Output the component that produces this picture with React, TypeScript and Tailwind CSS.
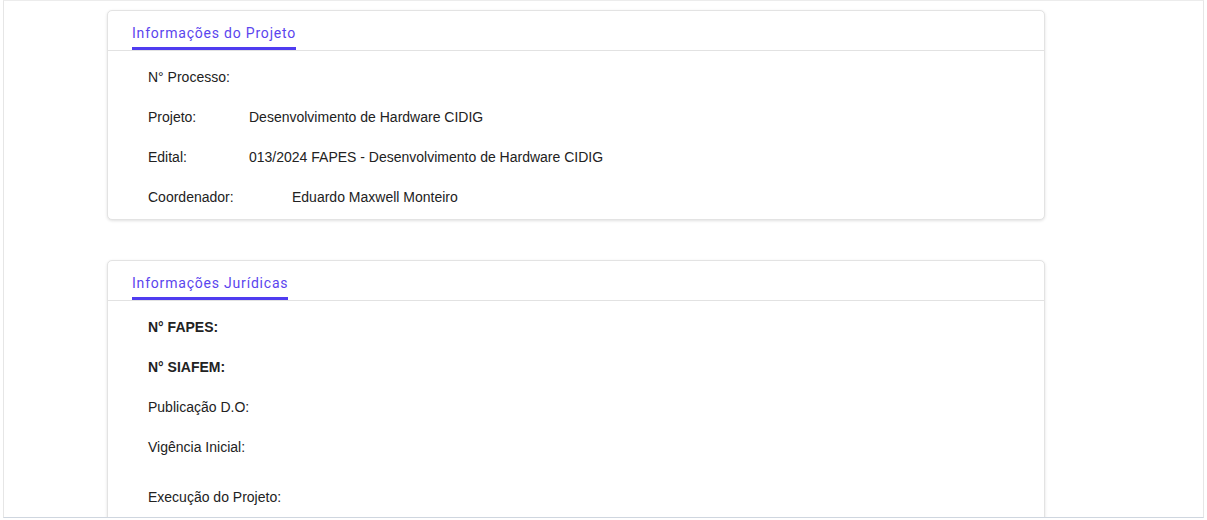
import React from "react";

const rowsProjeto = [
  { label: "N° Processo:", value: "", pad: "w-[101px]" },
  { label: "Projeto:", value: "Desenvolvimento de Hardware CIDIG", pad: "w-[101px]" },
  { label: "Edital:", value: "013/2024 FAPES - Desenvolvimento de Hardware CIDIG", pad: "w-[101px]" },
  { label: "Coordenador:", value: "Eduardo Maxwell Monteiro", pad: "w-[144px]" },
];

const Card = ({ title, children }: { title: string; children: React.ReactNode }) => (
  <div className="w-[938px] shrink-0 bg-white rounded-[5px] border border-[#e3e3e3] shadow-[0_1px_3px_rgba(0,0,0,0.12)]">
    <div className="border-b border-[#e2e2e2] px-6 h-[40px] flex items-end">
      <span className="font-['Roboto',sans-serif] text-[14px] tracking-[0.8px] text-[#5b45ee] border-b-[3px] border-[#4f3cf0] pb-[5px] leading-[18px]">
        {title}
      </span>
    </div>
    {children}
  </div>
);

export default function App() {
  return (
    <div className="w-[1207px] h-[520px] bg-white overflow-hidden">
      <div className="ml-[3px] w-[1201px] h-[518px] border-x border-t border-b border-x-[#e6e6e6] border-t-[#ececec] border-b-[#cfd6df] overflow-hidden flex flex-col gap-[40px] pt-[9px] pl-[103px] font-['Liberation_Sans',Arial,sans-serif] text-[14px] text-[#222]">
        <Card title="Informações do Projeto">
          <div className="flex flex-col gap-[24px] pl-10 pt-[18px] pb-[14px] leading-[16px]">
            {rowsProjeto.map((r) => (
              <div key={r.label} className="flex">
                <span className={r.pad}>{r.label}</span>
                <span>{r.value}</span>
              </div>
            ))}
          </div>
        </Card>
        <Card title="Informações Jurídicas">
          <div className="flex flex-col gap-[24px] pl-10 pt-[18px] pb-[20px] leading-[16px]">
            <div className="font-bold">N° FAPES:</div>
            <div className="font-bold">N° SIAFEM:</div>
            <div>Publicação D.O:</div>
            <div className="mb-[10px]">Vigência Inicial:</div>
            <div>Execução do Projeto:</div>
          </div>
        </Card>
      </div>
    </div>
  );
}
